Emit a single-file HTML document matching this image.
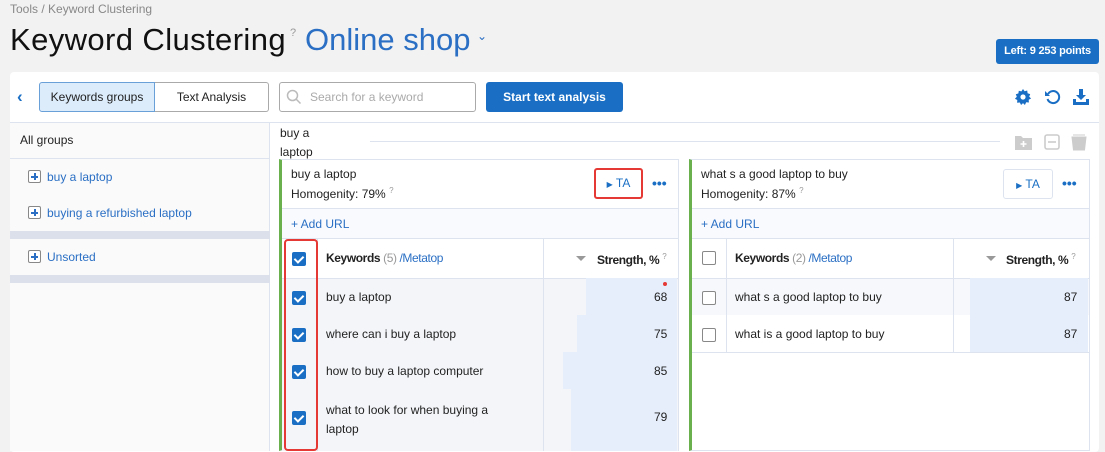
<!DOCTYPE html><html><head><style>
*{box-sizing:border-box;margin:0;padding:0}
body{width:1105px;height:451px;overflow:hidden;background:#f2f2f2;font-family:"Liberation Sans",sans-serif;position:relative;color:#222}
.a{position:absolute}
.cb{position:absolute;width:14px;height:14px;border-radius:2px;background:#1a6fc4}
.cb:after{content:"";position:absolute;left:4px;top:2px;width:4px;height:7px;border:solid #fff;border-width:0 2px 2px 0;transform:rotate(45deg)}
.ucb{position:absolute;width:14px;height:14px;border:1px solid #888;border-radius:2px;background:#fff}
.t{font-size:12px;color:#222}
.blue{color:#2a6fc4}
.plus{position:absolute;width:13px;height:13px;border:1px solid #888;border-radius:2px;background:#fff}
.plus:before{content:"";position:absolute;left:2px;top:5px;width:7px;height:1.6px;background:#2a6fc4}
.plus:after{content:"";position:absolute;left:5px;top:2px;width:1.6px;height:7px;background:#2a6fc4}
.sh{font-weight:bold;letter-spacing:-0.4px}
</style></head><body>
<div class="a" style="left:10px;top:2px;font-size:12px;color:#888">Tools / Keyword Clustering</div>
<div class="a" style="left:10px;top:22px;font-size:31px;color:#111;letter-spacing:0.4px">Keyword Clustering</div>
<div class="a" style="left:290px;top:27px;font-size:11px;color:#999">?</div>
<div class="a" style="left:305px;top:22px;font-size:31px;color:#2a6fc4">Online shop</div>
<div class="a" style="left:477px;top:29px;font-size:12px;color:#2a6fc4">⌄</div>
<div class="a" style="left:996px;top:39px;width:103px;height:25px;background:#1a6fc4;border-radius:3px;color:#fff;font-size:11px;font-weight:bold;text-align:center;line-height:25px;letter-spacing:-0.2px;white-space:nowrap">Left: 9 253 points</div>

<div class="a" style="left:10px;top:72px;width:1089px;height:380px;background:#fff;border-radius:4px"></div>
<div class="a" style="left:10px;top:122px;width:1089px;height:1px;background:#dde3ef"></div>
<div class="a" style="left:17px;top:87px;font-size:17px;font-weight:bold;color:#1a6fc4">‹</div>
<div class="a" style="left:39px;top:82px;width:116px;height:30px;background:#dcecfb;border:1px solid #6aa0d8;border-radius:3px 0 0 3px;font-size:12px;text-align:center;line-height:28px">Keywords groups</div>
<div class="a" style="left:155px;top:82px;width:114px;height:30px;border:1px solid #aaa;border-left:none;border-radius:0 3px 3px 0;font-size:12px;text-align:center;line-height:28px">Text Analysis</div>
<div class="a" style="left:279px;top:82px;width:197px;height:30px;border:1px solid #aaa;border-radius:3px;font-size:12px;color:#aaa;line-height:28px;padding-left:30px">Search for a keyword</div>
<svg class="a" style="left:286px;top:89px" width="16" height="16"><circle cx="6.5" cy="6.5" r="5" fill="none" stroke="#bbb" stroke-width="1.5"/><path d="M10 10l4.5 4.5" stroke="#bbb" stroke-width="1.5"/></svg>
<div class="a" style="left:486px;top:82px;width:137px;height:30px;background:#1a6fc4;border-radius:3px;color:#fff;font-size:12px;font-weight:bold;text-align:center;line-height:30px">Start text analysis</div>
<svg class="a" style="left:1014px;top:88px" width="18" height="18" viewBox="0 0 18 18"><path d="M9 1l1.6 2.2 2.6-.7.4 2.7 2.6.9-1 2.5 1.9 1.9-2.4 1.3.2 2.7-2.7-.2L10.9 17 9 15.1 7.1 17l-1.3-2.5-2.7.2.2-2.7L.9 10.7 2.8 8.8 1.8 6.3l2.6-.9.4-2.7 2.6.7z" fill="#1a6fc4"/><circle cx="9" cy="9" r="2.6" fill="#fff"/></svg>
<svg class="a" style="left:1044px;top:88px" width="18" height="18" viewBox="0 0 18 18"><path d="M4 6A6 6 0 1 1 3.5 11" fill="none" stroke="#1a6fc4" stroke-width="2"/><path d="M1 3v5h5z" fill="#1a6fc4"/></svg>
<svg class="a" style="left:1072px;top:88px" width="18" height="18" viewBox="0 0 18 18"><path d="M7 1h4v6h3l-5 5-5-5h3z" fill="#1a6fc4"/><path d="M1 11v6h16v-6h-3v3H4v-3z" fill="#1a6fc4"/></svg>

<div class="a" style="left:10px;top:123px;width:260px;height:328px;background:#fafafa;border-right:1px solid #dde3ef"></div>
<div class="a t" style="left:20px;top:133px">All groups</div>
<div class="a" style="left:10px;top:158px;width:260px;height:1px;background:#dde3ef"></div>
<div class="plus" style="left:28px;top:170px"></div><div class="a t blue" style="left:47px;top:170px">buy a laptop</div>
<div class="plus" style="left:28px;top:206px"></div><div class="a t blue" style="left:47px;top:206px">buying a refurbished laptop</div>
<div class="a" style="left:10px;top:231px;width:260px;height:8px;background:#dbe0eb"></div>
<div class="plus" style="left:28px;top:250px"></div><div class="a t blue" style="left:47px;top:250px">Unsorted</div>
<div class="a" style="left:10px;top:275px;width:260px;height:8px;background:#dbe0eb"></div>

<div class="a t" style="left:280px;top:124px;line-height:19px">buy a<br>laptop</div>
<div class="a" style="left:370px;top:141px;width:630px;height:1px;background:#dde3ef"></div>
<svg class="a" style="left:1014px;top:133px" width="80" height="18"><path d="M1 3h6l2 2h9v12H1z" fill="#ccc"/><path d="M9.5 8v6M6.5 11h6" stroke="#fff" stroke-width="1.6"/><rect x="31" y="2" width="14" height="14" rx="2" fill="none" stroke="#ccc" stroke-width="1.6"/><path d="M34 9h8" stroke="#ccc" stroke-width="1.6"/><path d="M58 4h14l-1.5 13h-11z M59 2h12" fill="#ccc" stroke="#ccc"/></svg>

<div class="a" style="left:279px;top:159px;width:400px;height:292px;border:1px solid #dde3ef;border-left:3px solid #6ab04c;background:#fff"></div>
<div class="a t" style="left:291px;top:167px">buy a laptop</div>
<div class="a t" style="left:291px;top:186px">Homogenity: 79% <sup style="font-size:8px;color:#999">?</sup></div>
<div class="a" style="left:594px;top:168px;width:49px;height:31px;border:2px solid #e53935;border-radius:3px;color:#1a6fc4;font-size:12px;line-height:27px;text-align:center"><span style="font-size:8px">▶</span> TA</div>
<div class="a" style="left:652px;top:175px;color:#1a6fc4;font-size:14px;font-weight:bold">•••</div>
<div class="a" style="left:282px;top:208px;width:396px;height:31px;background:#f8fafd;border-top:1px solid #dde3ef;border-bottom:1px solid #dde3ef"></div>
<div class="a t blue" style="left:291px;top:217px">+ Add URL</div>
<div class="a" style="left:282px;top:278px;width:396px;height:173px;background:#f3f5f9"></div>
<div class="a" style="left:543px;top:239px;width:1px;height:212px;background:#dde3ef"></div>
<div class="a" style="left:317px;top:239px;width:1px;height:212px;background:#dde3ef"></div>
<div class="a" style="left:282px;top:278px;width:396px;height:1px;background:#dde3ef"></div>
<div class="a" style="left:586px;top:278px;width:91px;height:37px;background:#e6eefc"></div>
<div class="a" style="left:577px;top:315px;width:100px;height:37px;background:#e6eefc"></div>
<div class="a" style="left:563px;top:352px;width:114px;height:37px;background:#e6eefc"></div>
<div class="a" style="left:571px;top:389px;width:106px;height:62px;background:#e6eefc"></div>
<div class="a" style="left:663px;top:282px;width:4px;height:4px;border-radius:2px;background:#e53935"></div>
<div class="a" style="left:284px;top:239px;width:34px;height:212px;border:2px solid #e53935;border-radius:4px"></div>
<div class="cb" style="left:292px;top:252px"></div>
<div class="a t sh" style="left:326px;top:251px">Keywords <span style="color:#999;font-weight:normal">(5)</span> <span class="blue" style="font-weight:normal">/Metatop</span></div>
<div class="a" style="left:576px;top:256px;border:5px solid transparent;border-top:5px solid #999"></div>
<div class="a t sh" style="left:597px;top:252px">Strength, % <sup style="font-size:8px;color:#999;font-weight:normal">?</sup></div>
<div class="cb" style="left:292px;top:291px"></div><div class="a t" style="left:326px;top:290px">buy a laptop</div><div class="a t" style="left:654px;top:290px">68</div>
<div class="cb" style="left:292px;top:328px"></div><div class="a t" style="left:326px;top:327px">where can i buy a laptop</div><div class="a t" style="left:654px;top:327px">75</div>
<div class="cb" style="left:292px;top:365px"></div><div class="a t" style="left:326px;top:364px">how to buy a laptop computer</div><div class="a t" style="left:654px;top:364px">85</div>
<div class="cb" style="left:292px;top:411px"></div><div class="a t" style="left:326px;top:401px;line-height:19px">what to look for when buying a<br>laptop</div><div class="a t" style="left:654px;top:410px">79</div>

<div class="a" style="left:689px;top:159px;width:401px;height:292px;border:1px solid #dde3ef;border-left:3px solid #6ab04c;background:#fff"></div>
<div class="a t" style="left:701px;top:167px">what s a good laptop to buy</div>
<div class="a t" style="left:701px;top:186px">Homogenity: 87% <sup style="font-size:8px;color:#999">?</sup></div>
<div class="a" style="left:1003px;top:169px;width:50px;height:30px;border:1px solid #dde3ef;border-radius:3px;color:#1a6fc4;font-size:12px;line-height:28px;text-align:center"><span style="font-size:8px">▶</span> TA</div>
<div class="a" style="left:1062px;top:175px;color:#1a6fc4;font-size:14px;font-weight:bold">•••</div>
<div class="a" style="left:692px;top:208px;width:397px;height:31px;background:#f8fafd;border-top:1px solid #dde3ef;border-bottom:1px solid #dde3ef"></div>
<div class="a t blue" style="left:701px;top:217px">+ Add URL</div>
<div class="a" style="left:692px;top:278px;width:397px;height:37px;background:#f6f8fb"></div>
<div class="a" style="left:726px;top:239px;width:1px;height:114px;background:#dde3ef"></div>
<div class="a" style="left:953px;top:239px;width:1px;height:114px;background:#dde3ef"></div>
<div class="a" style="left:692px;top:278px;width:397px;height:1px;background:#dde3ef"></div>
<div class="a" style="left:970px;top:278px;width:118px;height:74px;background:#e6eefc"></div>
<div class="a" style="left:692px;top:352px;width:397px;height:1px;background:#dde3ef"></div>
<div class="ucb" style="left:702px;top:251px"></div>
<div class="a t sh" style="left:735px;top:251px">Keywords <span style="color:#999;font-weight:normal">(2)</span> <span class="blue" style="font-weight:normal">/Metatop</span></div>
<div class="a" style="left:986px;top:256px;border:5px solid transparent;border-top:5px solid #999"></div>
<div class="a t sh" style="left:1006px;top:252px">Strength, % <sup style="font-size:8px;color:#999;font-weight:normal">?</sup></div>
<div class="ucb" style="left:702px;top:291px"></div><div class="a t" style="left:735px;top:290px">what s a good laptop to buy</div><div class="a t" style="left:1064px;top:290px">87</div>
<div class="ucb" style="left:702px;top:328px"></div><div class="a t" style="left:735px;top:327px">what is a good laptop to buy</div><div class="a t" style="left:1064px;top:327px">87</div>
</body></html>
